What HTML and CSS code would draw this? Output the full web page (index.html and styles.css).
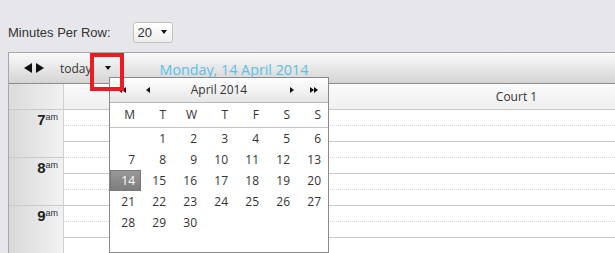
FILE: index.html
```html
<!DOCTYPE html>
<html lang="en">
<head>
    <meta charset="UTF-8">
    <meta name="viewport" content="width=device-width, initial-scale=1.0">
    <title>Court Schedule</title>
    <link rel="stylesheet" href="styles.css">
</head>
<body>
    <div class="options">
        <label class="options-label">Minutes Per Row:</label>
        <div class="select">
            <span class="select-value">20</span>
            <span class="caret"></span>
        </div>
    </div>

    <div class="calendar">
        <div class="toolbar">
            <div class="nav">
                <span class="tri tri-left"></span>
                <span class="tri tri-right"></span>
            </div>
            <span class="today">today</span>
            <span class="caret caret-today"></span>
            <span class="title">Monday, 14 April 2014</span>
        </div>

        <div class="head-row">
            <div class="time-head"></div>
            <div class="court-head">Court 1</div>
        </div>

        <div class="grid">
            <div class="times">
                <div class="hour"><span class="num">7</span><sup>am</sup></div>
                <div class="hour"><span class="num">8</span><sup>am</sup></div>
                <div class="hour"><span class="num">9</span><sup>am</sup></div>
                <div class="hour"></div>
            </div>
            <div class="slots">
                <div class="slot"></div>
                <div class="slot minor"></div>
                <div class="slot"></div>
                <div class="slot minor"></div>
                <div class="slot"></div>
                <div class="slot minor"></div>
                <div class="slot"></div>
                <div class="slot minor"></div>
                <div class="slot"></div>
                <div class="slot minor"></div>
                <div class="slot"></div>
                <div class="slot minor"></div>
            </div>
        </div>
    </div>

    <!-- date picker dropdown opened from the today button -->
    <div class="picker">
        <div class="picker-head">
            <span class="pnav pnav-first"><i class="tri-s tri-s-left"></i><i class="tri-s tri-s-left"></i></span>
            <span class="pnav pnav-prev"><i class="tri-s tri-s-left"></i></span>
            <span class="month">April 2014</span>
            <span class="pnav pnav-next"><i class="tri-s tri-s-right"></i></span>
            <span class="pnav pnav-last"><i class="tri-s tri-s-right"></i><i class="tri-s tri-s-right"></i></span>
        </div>
        <div class="days dow">
            <span>M</span><span>T</span><span>W</span><span>T</span><span>F</span><span>S</span><span>S</span>
        </div>
        <div class="days dates">
            <span></span><span>1</span><span>2</span><span>3</span><span>4</span><span>5</span><span>6</span>
            <span>7</span><span>8</span><span>9</span><span>10</span><span>11</span><span>12</span><span>13</span>
            <span class="selected">14</span><span>15</span><span>16</span><span>17</span><span>18</span><span>19</span><span>20</span>
            <span>21</span><span>22</span><span>23</span><span>24</span><span>25</span><span>26</span><span>27</span>
            <span>28</span><span>29</span><span>30</span>
        </div>
    </div>

    <div class="highlight"></div>
</body>
</html>
```

FILE: styles.css
```css
body {
    margin: 0;
    background: #e7e7eb;
    font-family: "Open Sans", "Noto Sans", sans-serif;
    color: #333;
    overflow: hidden;
}
.options {
    display: flex;
    align-items: center;
    padding: 22px 0 0 8px;
    height: 20px;
    margin-bottom: 10px;
}
.options-label {
    font-family: "Liberation Sans", Arial, sans-serif;
    font-size: 13px;
    color: #333;
}
.select {
    display: flex;
    align-items: center;
    box-sizing: border-box;
    width: 40px;
    height: 21px;
    margin-left: 22px;
    padding-left: 4px;
    border: 1px solid #c2c2c2;
    border-radius: 3px;
    background: linear-gradient(#ffffff, #eeeeee);
}
.select-value {
    font-family: "Liberation Sans", Arial, sans-serif;
    font-size: 13px;
}
.caret {
    width: 0;
    height: 0;
    border-left: 3px solid transparent;
    border-right: 3px solid transparent;
    border-top: 4px solid #111;
    margin-left: 9px;
}
.calendar {
    width: 960px;
    margin-left: 8px;
    border-left: 1px solid #a8a8a8;
}
.toolbar {
    display: flex;
    align-items: center;
    height: 30px;
    border-top: 1px solid #a8a8a8;
    border-bottom: 1px solid #8c8c8c;
    background: linear-gradient(#fafafa, #d4d4d4);
}
.nav {
    display: flex;
    gap: 4px;
    margin-left: 15px;
}
.tri {
    width: 0;
    height: 0;
    border-top: 5px solid transparent;
    border-bottom: 5px solid transparent;
}
.tri-left {
    border-right: 8px solid #111;
}
.tri-right {
    border-left: 8px solid #111;
}
.today {
    font-size: 12px;
    margin-left: 16px;
    color: #333;
}
.caret-today {
    margin-left: 13px;
}
.title {
    font-size: 14.3px;
    color: #5cbfe6;
    margin-left: 49px;
    margin-top: 2px;
}
.head-row {
    display: flex;
    height: 25px;
}
.time-head {
    width: 54px;
    border-right: 1px solid #d0d0d0;
    background: linear-gradient(90deg, #dcdcdc, #f0f0f0);
}
.court-head {
    flex: 1;
    text-align: center;
    font-size: 12px;
    line-height: 25px;
    background: linear-gradient(#fbfbfb, #efefef);
}
.grid {
    display: flex;
}
.times {
    width: 54px;
    border-right: 1px solid #d0d0d0;
    background: linear-gradient(90deg, #d8d8d8, #f2f2f2);
}
.hour {
    box-sizing: border-box;
    height: 48px;
    border-top: 1px solid #cacaca;
    text-align: right;
    padding: 1px 5px 0 0;
    font-family: "Liberation Sans", Arial, sans-serif;
}
.num {
    font-size: 15px;
    font-weight: bold;
    color: #222;
}
.hour sup {
    font-size: 9px;
    color: #333;
    vertical-align: 5px;
}
.slots {
    flex: 1;
    background: #fff;
}
.slot {
    box-sizing: border-box;
    height: 16px;
    border-top: 1px solid #c8c8c8;
}
.slot.minor {
    border-top: 1px dotted #d6d6d6;
}
.picker {
    position: absolute;
    left: 109px;
    top: 77px;
    box-sizing: border-box;
    width: 220px;
    height: 176px;
    border: 1px solid #8a8a8a;
    background: #fff;
}
.picker-head {
    position: relative;
    height: 24px;
    border-bottom: 1px solid #b8b8b8;
    background: linear-gradient(#ffffff, #e6e6e6);
}
.month {
    display: block;
    text-align: center;
    font-size: 12px;
    line-height: 24px;
}
.pnav {
    position: absolute;
    top: 9px;
    display: flex;
}
.pnav-first { left: 8px; }
.pnav-prev { left: 36px; }
.pnav-next { left: 180px; }
.pnav-last { left: 200px; }
.tri-s {
    display: block;
    width: 0;
    height: 0;
    border-top: 3px solid transparent;
    border-bottom: 3px solid transparent;
}
.tri-s-left {
    border-right: 4px solid #111;
}
.tri-s-right {
    border-left: 4px solid #111;
}
.days {
    display: grid;
    grid-template-columns: repeat(7, 1fr);
    padding: 0 1px 0 0;
    font-size: 12px;
}
.days span {
    text-align: right;
    padding-right: 6px;
}
.dow {
    height: 24px;
    line-height: 24px;
    border-bottom: 1px solid #c4c4c4;
}
.dates span {
    height: 21px;
    line-height: 21px;
}
.dates .selected {
    color: #fff;
    background: linear-gradient(#9a9a9a, #7c7c7c);
    box-shadow: inset 0 0 0 1px #777;
}
.highlight {
    position: absolute;
    left: 90px;
    top: 53px;
    box-sizing: border-box;
    width: 34px;
    height: 38px;
    border: 4px solid #ed1c24;
}
```
